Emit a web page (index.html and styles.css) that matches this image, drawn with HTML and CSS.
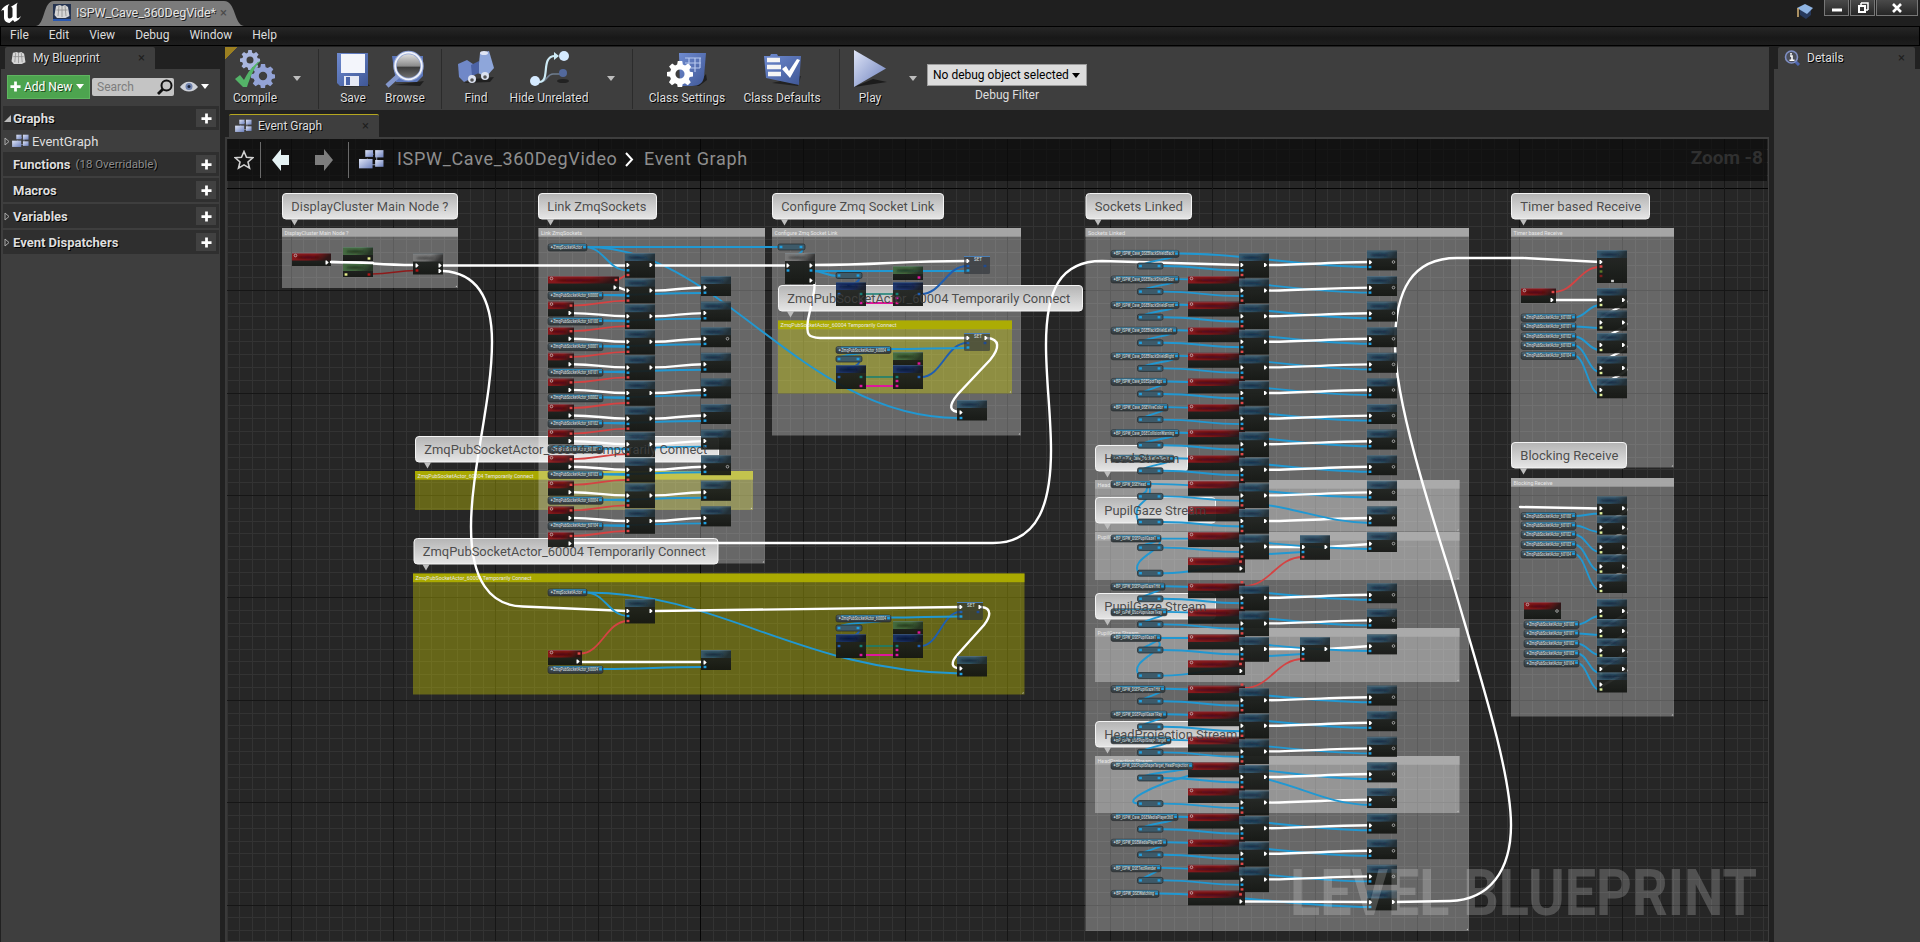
FILE: index.html
```html
<!DOCTYPE html>
<html lang="en">
<head>
<meta charset="utf-8">
<title>ISPW_Cave_360DegVideo</title>
<link rel="stylesheet" href="styles.css">
</head>
<body>
<svg class="defs" width="0" height="0">
  <defs>
    <linearGradient id="peri" x1="0" y1="0" x2="1" y2="1"><stop offset="0" stop-color="#dfe5f7"/><stop offset="1" stop-color="#6c80bd"/></linearGradient>
    <linearGradient id="flop" x1="0" y1="0" x2="1" y2="1"><stop offset="0" stop-color="#6f8bd0"/><stop offset="1" stop-color="#3f5796"/></linearGradient>
    <linearGradient id="lens" x1="0" y1="0" x2="0" y2="1"><stop offset="0" stop-color="#e8e8e8"/><stop offset=".5" stop-color="#8b8b8b"/><stop offset=".55" stop-color="#3c3c3c"/><stop offset="1" stop-color="#777"/></linearGradient>
    <symbol id="i-graph" viewBox="0 0 24 20">
      <path d="M8 5h6M17 7v6M8 9v4M9 15h8" stroke="#8e96b0" stroke-width="1" fill="none"/>
      <rect x="6" y="1" width="7.5" height="6.5" fill="url(#peri)"/><rect x="15.5" y="1" width="8" height="7" fill="url(#peri)"/>
      <rect x="0" y="9.500" width="13" height="9" fill="url(#peri)"/><rect x="15.500" y="10.500" width="8" height="6.500" fill="url(#peri)"/>
    </symbol>
    <symbol id="i-book" viewBox="0 0 16 15">
      <path d="M2 2l4-1 2 1 3-1 3 2 1.500 9-4 2H3L.5 11z" fill="#d6d6d6"/>
      <path d="M5 2L4 12M8 2v11M11 2l1 10M2.500 6h11" stroke="#8d8d8d" stroke-width=".8" fill="none"/>
    </symbol>
    <symbol id="i-gear" viewBox="0 0 20 20">
      <path fill-rule="evenodd" d="M8.300 0h3.400l.5 2.700 1.700.7L16.200 2l2.400 2.400-1.600 2.300.7 1.600 2.300.4v3.200l-2.500.5-.7 1.700 1.500 2.200-2.300 2.300-2.200-1.500-1.800.7-.4 2.700H8.300l-.5-2.700-1.700-.7-2.300 1.500-2.300-2.300L3 13.900l-.7-1.700L0 11.700V8.500L2.500 8l.6-1.600L1.600 4.200 4 1.900l2.200 1.500 1.600-.7zM10 6.500a3.500 3.500 0 1 0 0 7 3.500 3.500 0 0 0 0-7z"/>
    </symbol>
    <symbol id="i-plus" viewBox="0 0 12 12"><path d="M6 .5v11M.5 6h11" stroke="#fff" stroke-width="3" fill="none"/></symbol>
  </defs>
</svg>

<div class="app">
  <header class="titlebar">
    <svg class="ue" width="24" height="22" viewBox="0 0 24 22"><path d="M1 9.500C2 6 5 3.500 9.500 2 8 3.500 7.800 5 7.800 7v7.500c0 1.500.8 2 1.700 2 1.200 0 2.500-1 3-2V7c0-1.500-.8-2.300-1.800-2C12.500 3.500 15 2.500 18 .5c-1 1.200-1.300 2-1.300 4V15c0 1.700 1.600 1.700 4.300-1-1 3-3.500 5-6.500 6L13 18l-3.500 3C5.500 20.500 4 18 4 15.500V9.500C4 7.500 2.500 7.500 1 9.500z" fill="#fff"/></svg>
    <div class="wintab">
      <svg class="wintab-bg" width="210" height="26" viewBox="0 0 210 26"><path d="M0 26C9 25 7 1 18 1H188c12 0 10 24 20 25z" fill="#7b7b7b"/></svg>
      <span class="wintab-icon"><svg width="16" height="15"><use href="#i-book"/></svg></span>
      <span class="wintab-name">ISPW_Cave_360DegVide*</span>
      <span class="wintab-x">×</span>
    </div>
    <span class="spacer"></span>
    <svg class="cap" width="18" height="18" viewBox="0 0 18 18"><path d="M4 7v5l6 4 5-4V7z" fill="#27395c"/><path d="M1 5l8-4 8 4-6 6z" fill="#8fb4e3"/><path d="M2 5v9" stroke="#d9b679" stroke-width="1.500"/></svg>
    <div class="winbtns">
      <span class="wb"><svg width="12" height="12"><path d="M1 8h10" stroke="#fff" stroke-width="3"/></svg></span>
      <span class="wb"><svg width="12" height="12"><path d="M4 1h7v7M4 1v2M11 8H9" stroke="#fff" stroke-width="1.500" fill="none"/><rect x="2" y="4" width="6" height="6" stroke="#fff" stroke-width="2" fill="none"/></svg></span>
      <span class="wb wide"><svg width="12" height="12"><path d="M2 2l8 8M10 2l-8 8" stroke="#fff" stroke-width="2.600"/></svg></span>
    </div>
  </header>
  <nav class="menubar"><span>File</span><span>Edit</span><span>View</span><span>Debug</span><span>Window</span><span>Help</span></nav>

  <div class="main">
    <aside class="left">
      <div class="tab tab-left"><svg width="15" height="14"><use href="#i-book"/></svg><span>My Blueprint</span><i>×</i></div>
      <div class="panel">
        <div class="tools">
          <div class="addnew"><svg width="11" height="11"><use href="#i-plus"/></svg><span>Add New</span><b class="caret"></b></div>
          <div class="search"><span>Search</span><svg width="16" height="16" viewBox="0 0 16 16"><circle cx="9.500" cy="6.500" r="5" fill="none" stroke="#111" stroke-width="2"/><path d="M6 10l-5 5" stroke="#111" stroke-width="2.800"/></svg></div>
          <svg class="eye" width="18" height="12" viewBox="0 0 18 12"><path d="M0 6C5-1 13-1 18 6 13 12 5 12 0 6z" fill="#ced1d8"/><circle cx="9" cy="5.500" r="3.500" fill="#6f82ad"/><circle cx="9" cy="5.500" r="1.500" fill="#1c2438"/></svg>
          <b class="caret"></b>
        </div>
        <div class="row head"><svg class="tri" width="7" height="7"><path d="M7 0v7H0z" fill="#bbb"/></svg><span>Graphs</span><u><svg width="11" height="11"><use href="#i-plus"/></svg></u></div>
        <div class="row sub"><svg class="tri" width="6" height="9"><path d="M1 1l4 3.500L1 8z" fill="none" stroke="#aaa"/></svg><svg class="gi" width="17" height="14"><use href="#i-graph"/></svg><span>EventGraph</span></div>
        <div class="row head"><span class="tri"></span><span>Functions</span><em>(18 Overridable)</em><u><svg width="11" height="11"><use href="#i-plus"/></svg></u></div>
        <div class="row head"><span class="tri"></span><span>Macros</span><u><svg width="11" height="11"><use href="#i-plus"/></svg></u></div>
        <div class="row head"><svg class="tri" width="6" height="9"><path d="M1 1l4 3.500L1 8z" fill="none" stroke="#aaa"/></svg><span>Variables</span><u><svg width="11" height="11"><use href="#i-plus"/></svg></u></div>
        <div class="row head"><svg class="tri" width="6" height="9"><path d="M1 1l4 3.500L1 8z" fill="none" stroke="#aaa"/></svg><span>Event Dispatchers</span><u><svg width="11" height="11"><use href="#i-plus"/></svg></u></div>
      </div>
    </aside>

    <section class="center">
      <div class="toolbar">
        <div class="group g1">
          <div class="tool w60"><svg width="42" height="40" viewBox="0 0 42 40"><use href="#i-gear" x="6" y="1" width="20" height="20" fill="#a9b6df"/><use href="#i-gear" x="17" y="15" width="24" height="24" fill="#93a3d6"/><path d="M1 30l5-4 4 5c4-8 8-14 17-20-7 8-10 15-14 27H9z" fill="#54b368"/></svg><span>Compile</span></div>
          <div class="drop"><b class="caret dim"></b></div>
        </div>
        <div class="group g2">
          <div class="tool w52"><svg width="36" height="40" viewBox="0 0 36 40"><path d="M5 38l30-1-4-4z" fill="#222"/><path d="M2 4h31v33H5l-3-3z" fill="url(#flop)"/><rect x="6" y="5" width="24" height="19" fill="#f3f5fb"/><rect x="9" y="27" width="15" height="10" fill="#e6e9f4"/><rect x="11" y="28" width="4" height="8" fill="#4a64a8"/></svg><span>Save</span></div>
          <div class="tool w52"><svg width="42" height="40" viewBox="0 0 42 40"><path d="M10 36l26 1 4-5z" fill="#1f1f1f"/><path d="M8 7h31v20l-6 6H12z" fill="#5b76ba"/><path d="M14 27L3 37" stroke="#8397cb" stroke-width="4.500"/><circle cx="24.500" cy="17" r="13.500" fill="url(#lens)" stroke="#8fa2d4" stroke-width="3.500"/><circle cx="24.500" cy="17" r="13.300" fill="none" stroke="#f0f3fb" stroke-width="1.800"/></svg><span>Browse</span></div>
        </div>
        <div class="group g3">
          <div class="tool w52"><svg width="40" height="40" viewBox="0 0 40 40"><path d="M8 34l26-1 4-5-20 2z" fill="#202020"/><path d="M2 15l9-4 6 4-1 14-8 4-5-5z" fill="#7088c8"/><path d="M24 4l9-2 5 17-8 9-8-4z" fill="#8ea6da"/><path d="M15 16l8-4v12l-7 3z" fill="#4c63a5"/><ellipse cx="28" cy="4" rx="4" ry="2" fill="#dfe5f5"/><circle cx="16" cy="30" r="4" fill="#dce2f0"/><circle cx="29" cy="27" r="4" fill="#dce2f0"/><circle cx="16" cy="31" r="1.800" fill="#555"/><circle cx="29" cy="28" r="1.800" fill="#555"/></svg><span>Find</span></div>
          <div class="tool w94"><svg width="40" height="40" viewBox="0 0 40 40"><ellipse cx="34" cy="32" rx="6" ry="2" fill="#222"/><path d="M6 33h5c7 0 7-8 13-8h8" stroke="#6f7d8f" stroke-width="1.700" fill="none"/><path d="M6 33h4c12 0 1-26 16-26h3" stroke="#cdeaf5" stroke-width="2.200" fill="none"/><path d="M25 3l5 4-5 4z" fill="#cdeaf5"/><circle cx="35" cy="7" r="5" fill="#d5eaff"/><circle cx="6" cy="32" r="5" fill="#d5eaff"/><circle cx="34" cy="24" r="4" fill="#53699c"/></svg><span>Hide Unrelated</span></div>
          <div class="drop"><b class="caret dim"></b></div>
        </div>
        <div class="group g4">
          <div class="tool w94"><svg width="42" height="40" viewBox="0 0 42 40"><path d="M8 37l24-2 8-10 1 6-8 6z" fill="#1f1f1f"/><path d="M13 4h27l-2 24c-1 6-5 9-12 9H14z" fill="url(#flop)"/><path d="M19 9h16M19 14h16M19 19h15M23 9v13M29 9v14M34 9v10" stroke="#b6c7ee" stroke-width="1.200"/><use href="#i-gear" x="1" y="12" width="26" height="26" fill="#fff"/></svg><span>Class Settings</span></div>
          <div class="tool w94"><svg width="40" height="40" viewBox="0 0 40 40"><path d="M10 34l26 3 3-10z" fill="#222"/><path d="M2 7h6l1-2h6l1 2h23l-2 29-33-7z" fill="url(#flop)"/><path d="M5 11h13M5 18h14M6 25h13" stroke="#f5f5f5" stroke-width="4.500"/><path d="M20 20l4-3 3 5 8-12 3 1-10 18z" fill="#fff"/></svg><span>Class Defaults</span></div>
        </div>
        <div class="group g5">
          <div class="tool w52"><svg width="36" height="40" viewBox="0 0 36 40"><path d="M2 38l33-5-14-3z" fill="#1c1c1c"/><path d="M2 1l32 18.500L2 38z" fill="url(#peri)"/></svg><span>Play</span></div>
          <div class="drop"><b class="caret dim"></b></div>
          <div class="filter"><div class="combo"><span>No debug object selected</span><b class="caret dark"></b></div><span>Debug Filter</span></div>
        </div>
      </div>
      <div class="tab tab-graph"><svg width="17" height="14"><use href="#i-graph"/></svg><span>Event Graph</span><i>×</i></div>
      <div class="graph">
        <svg id="canvas" class="canvas" viewBox="227 139 1541 802"></svg>
        <div class="crumbs">
          <svg class="star" width="20" height="20" viewBox="0 0 20 20"><path d="M10 1.500l2.500 5.800 6.300.5-4.800 4.200 1.500 6.200-5.500-3.300-5.500 3.300L6 12 1.200 7.800l6.300-.5z" fill="none" stroke="#d0d0d0" stroke-width="1.600"/></svg>
          <span class="vsep"></span>
          <svg class="back" width="17" height="22" viewBox="0 0 17 22"><path d="M0 11L9 0v6h8v10H9v6z" fill="#e4f1f3"/></svg>
          <svg class="fwd" width="18" height="22" viewBox="0 0 18 22"><path d="M18 11L9 0v6H0v10h9v6z" fill="#7d7d7d"/></svg>
          <span class="vsep"></span>
          <svg class="cg" width="25" height="21"><use href="#i-graph"/></svg>
          <span class="crumb c1">ISPW_Cave_360DegVideo</span>
          <svg class="chev" width="9" height="15" viewBox="0 0 9 15"><path d="M1 1l6 6.500L1 14" fill="none" stroke="#fff" stroke-width="2"/></svg>
          <span class="crumb c2">Event Graph</span>
          <span class="zoom">Zoom -8</span>
        </div>
      </div>
    </section>

    <aside class="right">
      <div class="tab tab-right"><svg width="17" height="16" viewBox="0 0 17 16"><path d="M10 10l5 5" stroke="#4e66ad" stroke-width="3"/><circle cx="7.500" cy="7" r="6" fill="#4b4f5a" stroke="#7f8fc5" stroke-width="1.600"/><path d="M6 6h2v4M5.500 10.200h5M7 3v1.800" stroke="#fff" stroke-width="1.600" fill="none"/></svg><span>Details</span><i>×</i></div>
      <div class="panel"></div>
    </aside>
  </div>
</div>
<script src="graph.js"></script>
</body>
</html>
```

FILE: styles.css
```css
* { box-sizing: border-box; }
body { margin: 0; background: #212121; font-family: Roboto, "Liberation Sans", sans-serif; font-size: 12px; color: #dedede; overflow: hidden; }
.defs { position: absolute; }
svg { display: block; flex: none; }
.app { display: flex; flex-direction: column; width: 1920px; height: 942px; }
.spacer { flex: 1; }

.titlebar { display: flex; height: 26px; background: #1f1f1f; }
.ue { margin: 2px 0 0 0; }
.wintab { position: relative; display: flex; align-items: center; width: 210px; height: 26px; margin-left: 12px; padding: 0 0 1px 17px; }
.wintab-bg { position: absolute; left: 0; top: 0; }
.wintab-icon { position: relative; width: 18px; height: 17px; background: #243350; border-bottom: 2px solid #2a58b0; padding-left: 1px; }
.wintab-name { position: relative; margin-left: 5px; width: 140px; font-size: 12.5px; letter-spacing: -.08px; color: #e4e4e4; text-shadow: 1px 1px 0 #222; white-space: nowrap; }
.wintab-x { position: relative; margin-left: 4px; font-size: 13px; color: #4a4a4a; }
.cap { margin: 3px 10px 0 0; }
.winbtns { display: flex; height: 15px; margin-right: 2px; }
.wb { width: 25px; height: 16px; margin-right: 1px; border: 1px solid #777; border-top: 0; background: linear-gradient(#4a4a4a, #262626); display: flex; align-items: center; justify-content: center; }
.wb.wide { width: 42px; margin-right: 0; }

.menubar { display: flex; height: 20px; align-items: center; border: 1px solid #000; background: linear-gradient(#262626, #181818 60%, #1d1d1d); padding: 0 0 2px 9px; font-size: 12px; color: #dcdcdc; }
.menubar span { margin-right: 20px; }

.main { flex: 1; display: flex; min-height: 0; padding-top: 1px; }
.left { width: 221px; display: flex; flex-direction: column; padding-left: 1px; }
.center { width: 1545px; margin-left: 4px; display: flex; flex-direction: column; }
.right { flex: 1; margin-left: 4px; display: flex; flex-direction: column; }
.panel { flex: 1; background: #3e3e3e; margin-right: 1px; }
.right .panel { margin-right: 0; }
.tab { display: flex; align-items: center; height: 22px; background: #3e3e3e; border-radius: 2px 2px 0 0; text-shadow: 1px 1px 0 #000; }
.tab i { font-style: normal; color: #1f1f1f; margin-left: auto; font-size: 13px; text-shadow: none; }
.tab-left, .tab-right, .tab-graph { font-size: 12px; padding: 0 10px 1px 6px; }
.tab-left { width: 150px; margin-left: 4px; gap: 7px; }
.tab-right { width: 137px; margin-left: 4px; gap: 6px; }
.tab-graph { width: 150px; height: 23px; margin: 4px 0 0 4px; gap: 6px; border-top: 1px solid #b5a71f; }

.tools { display: flex; align-items: center; height: 37px; padding: 0 0 2px 6px; }
.addnew { display: flex; align-items: center; width: 83px; height: 24px; background: #4da44f; border: 1px solid #5fb560; padding: 0 5px 0 2px; font-size: 12px; text-shadow: 1px 1px 0 #1c4a1c; color: #fff; }
.addnew span { margin: 0 4px 0 3px; white-space: nowrap; }
.caret { width: 0; height: 0; border: 4.500px solid transparent; border-top: 5px solid #fff; border-bottom: 0; flex: none; }
.caret.dim { border-top-color: #bdbdbd; }
.caret.dark { border-top-color: #000; }
.search { display: flex; align-items: center; justify-content: space-between; width: 82px; height: 18px; margin-left: 2px; background: #c4c4c4; border-radius: 2px; padding: 0 1px 0 5px; color: #7d7d7d; }
.eye { margin: 0 3px 0 6px; }
.row { display: flex; align-items: center; height: 24px; margin: 0 1px 2px 2px; }
.row.head { background: #2f2f2f; font-weight: 700; font-size: 13px; text-shadow: 1px 1px 0 #000; }
.row.sub { height: 22px; margin-bottom: 0; margin-top: -2px; font-size: 13px; }
.tri { width: 7px; margin: 0 2px 0 1px; flex: none; }
.gi { margin-right: 3px; }
.sub .tri { margin-right: 1px; }
.row em { font: 400 11.500px Roboto, sans-serif; color: #8c8c8c; margin-left: 5px; }
.row u { margin-left: auto; margin-right: 3px; width: 20px; height: 18px; background: #414141; display: flex; align-items: center; justify-content: center; text-decoration: none; }

.toolbar { display: flex; height: 63px; width: 1544px; background: linear-gradient(135deg, #9c8021 0 9px, transparent 9px) no-repeat, #3e3e3e; }
.group { display: flex; height: 60px; margin-top: 2px; border-right: 1px solid #2b2b2b; }
.g1 { width: 94px; }
.g2 { width: 123px; padding-left: 8px; }
.g3 { width: 191px; padding-left: 8px; }
.g4 { width: 207px; padding-left: 7px; gap: 1px; }
.g5 { border: 0; padding-left: 4px; }
.tool { display: flex; flex-direction: column; align-items: center; white-space: nowrap; text-shadow: 1px 1px 0 #000; line-height: 16px; }
.tool svg { margin: 0 0 1px; }
.w60 { width: 60px; }
.w52 { width: 52px; }
.w94 { width: 94px; }
.g3 .drop { margin-left: 3px; }
.g5 .drop { margin-left: 5px; }
.drop { width: 24px; display: flex; justify-content: center; padding-top: 27px; }
.filter { display: flex; flex-direction: column; align-items: center; margin-left: 2px; padding-top: 15px; }
.combo { display: flex; align-items: center; justify-content: space-between; width: 160px; height: 22px; background: #dcdcdc; border: 1px solid #9c9c9c; color: #000; padding: 0 6px 0 5px; margin-bottom: 2px; white-space: nowrap; }

.graph { position: relative; flex: 1; border: 2px solid #3e3e3e; border-bottom-width: 1px; border-left-color: #3a3a3a; width: 1544px; min-height: 0; }
.canvas { width: 1541px; height: 802px; }
.crumbs { position: absolute; left: 0; top: 0; right: 0; height: 42px; padding-bottom: 1px; display: flex; align-items: center; background: rgba(8, 8, 8, .66); }
.star { margin-left: 7px; }
.vsep { width: 1px; height: 36px; background: #6a6a6a; margin-left: 6px; }
.back { margin-left: 11px; }
.fwd { margin-left: 26px; }
.fwd + .vsep { margin-left: 15px; }
.cg { margin-left: 10px; }
.crumb { font-size: 18px; letter-spacing: .68px; color: #8e8e8e; white-space: nowrap; padding-bottom: 2px; }
.c1 { width: 220px; margin-left: 13px; }
.c2 { letter-spacing: .7px; }
.chev { margin: 0 10px 0 8px; }
.zoom { margin: 0 4px 5px auto; font-size: 19px; font-weight: 700; color: #303030; }

.bubble-text { font: 13px Roboto, sans-serif; fill: #404040; fill-opacity: .92; }
.comment-text { font: 5.500px Roboto, sans-serif; fill: #e6e6e6; }
.pill-text { font: 500 4.500px Roboto, sans-serif; fill: #cbd6da; }
.mark { font: 700 65px Roboto, sans-serif; fill: #fff; fill-opacity: .2; }
.wire { fill: none; stroke-linecap: round; }
.white { stroke: #fff; stroke-width: 2.400; }
.blue { stroke: #2198d2; stroke-width: 1.900; }
.navy { stroke: #1f5eb0; stroke-width: 1.900; }
.red { stroke: #d44343; stroke-width: 1.800; }
.maroon { stroke: #8e1a1a; stroke-width: 1.600; }
.pink { stroke: #e0169c; stroke-width: 2.200; }
.teal { stroke: #157f73; stroke-width: 1.700; }
```

FILE: graph.js
```js
// Draws the blueprint graph: grid, comment boxes, wires, nodes.
const STEP = 25.6;
const layers = { grid: '', comments: '', wires: '', nodes: '', labels: '' };

function gradient(id, a, b) {
  return `<linearGradient id="${id}" x1="0" y1="0" x2="1" y2=".25"><stop offset="0" stop-color="${a}"/><stop offset=".6" stop-color="${a}"/><stop offset="1" stop-color="${b}"/></linearGradient>`;
}
const defs = `<defs>
  ${gradient('h-fn', '#34566b', '#1e2c34')}${gradient('h-ev', '#8b1317', '#2a1011')}
  ${gradient('h-pure', '#436b40', '#223322')}${gradient('h-flow', '#7b7b7b', '#333')}
  ${gradient('h-cast', '#142f66', '#101626')}
  <linearGradient id="bub" x1="0" y1="0" x2="0" y2="1"><stop offset="0" stop-color="#b4b4b4"/><stop offset="1" stop-color="#e6e6e6"/></linearGradient>
  <linearGradient id="body" x1="0" y1="0" x2="0" y2="1"><stop offset="0" stop-color="#222623"/><stop offset="1" stop-color="#131512"/></linearGradient>
  <linearGradient id="pillg" x1="0" y1="0" x2="0" y2="1"><stop offset="0" stop-color="#5d7886"/><stop offset=".35" stop-color="#3e4b51"/><stop offset="1" stop-color="#343a3c"/></linearGradient>
  <filter id="soft" x="-20%" y="-80%" width="140%" height="260%"><feGaussianBlur stdDeviation="1.300"/></filter>
</defs>`;

function line(x1, y1, x2, y2, color) {
  return `<path d="M${x1} ${y1}L${x2} ${y2}" stroke="${color}" stroke-width="1"/>`;
}
for (let pass = 0; pass < 2; pass++) {
  for (let i = -8; i < 120; i++) {
    const major = i % 8 === 0;
    if (major !== (pass === 1)) continue;
    const x = Math.floor(291 + i * 12.8) + .5, y = Math.floor(188.3 + i * 12.8) + .5;
    const dark = i === 32 ? '#050505' : '#161616';
    if (x > 227 && x < 1768) layers.grid += line(x, 139, x, 942, major ? dark : '#333');
    if (y > 139 && y < 942) layers.grid += line(227, y, 1768, y, major ? (i === 0 ? '#050505' : '#161616') : '#333');
  }
}

function bubble(x, y, w, text, textWidth, h = 26.5) {
  layers.comments += `<path d="M${x + 9} ${y + h}h7l-3.500 6z" fill="#bdbdbd"/>
    <rect x="${x + .5}" y="${y + .5}" width="${w - 1}" height="${h - 1}" rx="3.500" fill="url(#bub)" stroke="#f4f4f4"/>`;
  layers.labels += `<text class="bubble-text" x="${x + 9.3}" y="${y + 18}" textLength="${textWidth}" lengthAdjust="spacingAndGlyphs">${text}</text>`;
}
function comment(x, y, x2, y2, text, tw, yellow) {
  const w = x2 - x;
  layers.comments += `<rect x="${x}" y="${y}" width="${w}" height="${y2 - y}" fill="${yellow ? '#d0d005' : '#fff'}" fill-opacity="${yellow ? .375 : .3}"/>
    <rect x="${x}" y="${y}" width="${w}" height="8.700" fill="${yellow ? '#aeae00' : '#ababab'}" fill-opacity=".93"/>
    <text class="comment-text" x="${x + 2.5}" y="${y + 6.5}" textLength="${tw}" lengthAdjust="spacingAndGlyphs">${text}</text>
    <path d="M${x2 - 1} ${y2 - 2.5}v1.500h-1.500z" fill="#ccc"/>`;
}
function path(d, cls) { layers.wires += `<path class="wire ${cls}" d="${d}"/>`; }
function wire(x1, y1, x2, y2, cls) {
  const d = Math.max(Math.abs(x2 - x1) * .45, 4);
  path(`M${x1} ${y1}C${x1 + d} ${y1} ${x2 - d} ${y2} ${x2} ${y2}`, cls);
}
function exec(x, y) { layers.nodes += `<path d="M${x - 1.5} ${y - 2}h1.200l2 2-2 2h-1.200z" fill="#fff"/>`; }
function ring(x, y) { layers.nodes += `<circle cx="${x}" cy="${y}" r="1.300" fill="none" stroke="#ccc" stroke-width=".7"/>`; }
function pin(x, y, c = '#1f9fe0') { layers.nodes += `<rect x="${x - 1.4}" y="${y - 1.2}" width="2.800" height="2.400" fill="${c}"/>`; }
function box(x, y, w, h, type, hh = 8) {
  const smear = { fn: '#10283f', ev: '#4d0508', pure: '#20391f', flow: '#4a4a4a', cast: '#040d3a' }[type];
  layers.nodes += `<g opacity=".93"><rect x="${x}" y="${y}" width="${w}" height="${h}" fill="url(#body)"/>
    <rect x="${x}" y="${y}" width="${w}" height="${hh}" fill="url(#h-${type})"/>
    <ellipse cx="${x + w * .42}" cy="${y + hh * .58}" rx="${w * .32}" ry="1.600" fill="${smear}" filter="url(#soft)"/>
    <path d="M${x} ${y + .4}h${w}" stroke="#8aa0aa" stroke-opacity=".45" stroke-width=".8"/></g>`;
}
function event(x, y, w, h = 15) { box(x, y, w, h, 'ev', 7.5); ring(x + 3.5, y + 2.5); }
function pill(x, y, x2, text, h = 7) {
  const w = x2 - x;
  layers.nodes += `<rect x="${x}" y="${y}" width="${w}" height="${h}" rx="2" fill="url(#pillg)" stroke="#23292b" stroke-width=".6"/>
    <path d="M${x + 5} ${y + .8}H${x2 - 1}" stroke="#2690c4" stroke-width="1.200" stroke-opacity=".75"/>
    <text class="pill-text" x="${x + 2}" y="${y + 5}" textLength="${w - 7}" lengthAdjust="spacingAndGlyphs">✦${text}</text>`;
  pin(x2 - 2.5, y + 3.2);
}
function relay(x, y, w = 26) {
  layers.nodes += `<rect x="${x}" y="${y}" width="${w}" height="6" rx="1.800" fill="#3d5a69" stroke="#20262a" stroke-width=".7"/>`;
  pin(x + 3, y + 3); pin(x + w - 4, y + 3);
}
function setNode(x, y) {
  layers.nodes += `<rect x="${x}" y="${y}" width="26" height="18" rx="1.500" fill="#2d3238" fill-opacity=".62"/><path d="M${x} ${y + .5}h26" stroke="#4b7fb5"/>
    <text class="pill-text" x="${x + 10}" y="${y + 4.8}">SET</text>`;
  exec(x + 4, y + 5); pin(x + 4, y + 10, '#1f5eb0'); pin(x + 4, y + 14.5); pin(x + 21, y + 10, '#1f4a90');
}

/* Comment boxes and their bubbles */
comment(415, 471, 753, 510, 'ZmqPubSocketActor_60004 Temporarily Connect', 116, true);
bubble(415, 436, 304, 'ZmqPubSocketActor_60004 Temporarily Connect', 283);
comment(282, 228, 458, 288, 'DisplayCluster Main Node ?', 64);
bubble(282, 193, 176, 'DisplayCluster Main Node ?', 157);
comment(538.500, 228, 765, 563.500, 'Link ZmqSockets', 41);
bubble(538, 193, 119, 'Link ZmqSockets', 99);
comment(772, 228, 1021, 435.500, 'Configure Zmq Socket Link', 63);
bubble(772, 193, 172, 'Configure Zmq Socket Link', 153);
comment(778, 320.500, 1012, 393.500, 'ZmqPubSocketActor_60004 Temporarily Connect', 116, true);
bubble(778, 285, 305, 'ZmqPubSocketActor_60004 Temporarily Connect', 283);
comment(413, 573.500, 1024.500, 694.500, 'ZmqPubSocketActor_60004 Temporarily Connect', 116, true);
bubble(413.500, 538, 305, 'ZmqPubSocketActor_60004 Temporarily Connect', 283);
comment(1085.500, 228, 1469, 931, 'Sockets Linked', 37);
bubble(1085.500, 193, 106.500, 'Sockets Linked', 88);
comment(1095, 480, 1459.500, 531.500, 'Head Stream', 32);
bubble(1095, 445, 93, 'Head Stream', 75);
comment(1095, 532, 1459.500, 580, 'PupilGaze Stream', 41);
bubble(1095, 497, 121, 'PupilGaze Stream', 102);
comment(1095, 628, 1459.500, 682, 'PupilGaze Stream', 41);
bubble(1095, 593, 121, 'PupilGaze Stream', 102);
comment(1095, 756, 1459.500, 813, 'HeadProjection Stream', 55);
bubble(1095, 721, 150, 'HeadProjection Stream', 133);
comment(1511, 228, 1674, 467.500, 'Timer based Receive', 49);
bubble(1511, 193, 139, 'Timer based Receive', 121);
comment(1511, 478, 1674, 716.500, 'Blocking Receive', 39);
bubble(1511, 442, 116, 'Blocking Receive', 98);

/* Main node */
wire(331, 262, 414, 265, 'white'); wire(372, 274, 416, 270.500, 'maroon');
path('M443 265.500H627', 'white');
path('M443 271C478 273 492 300 492 342C492 400 471 470 471 527C471 580 490 606 523 606.500L627 611', 'white');
event(292, 253, 39, 13); exec(327, 262.500);
box(343, 247, 30, 14, 'pure'); pin(369, 258.500, '#e9f08a');
box(343, 263, 30, 14, 'pure'); pin(346, 274.500, '#e9f08a'); pin(369, 274.500, '#b01515');
layers.nodes += '<path class="wire white" d="M331 262L373 263"/>';
box(413, 253.500, 30, 21, 'flow'); exec(417, 265.500); exec(440, 265.500); exec(440, 271); pin(417, 270.500, '#b01515');

/* Link ZmqSockets */
path('M585 247H781', 'blue'); wire(585, 247, 627, 270.500, 'blue'); path('M587 247C720 247 800 417 958 418', 'blue');
pill(548, 244, 587, 'ZmqSocketActor');
const ports = [60000, 60100, 60001, 60101, 60002, 60102, 60003, 60103, 60004, 60104];
for (let k = 0; k <= 10; k++) {
  const y = 276 + STEP * k, w = k ? 26 : 71, f = 253 + STEP * k;
  wire(548 + w - 3, y + 4, 628, f + 22, 'red');
  event(548, y, w); pin(548 + w - 3, y + 4, '#e04848'); exec(548 + w - 4, y + 11.500);
  if (k < 10) {
    wire(548 + w - 2, y + 11.500, 628, f + STEP + 12, 'white');
    wire(653, f + STEP + 12, 704, y + 11.500, 'white');
    wire(602, y + 19, 628, f + STEP + 17, 'blue');
    wire(602, y + 19, 705, y + 17, 'blue');
    pill(548, y + 16, 603, 'ZmqPubSocketActor_' + ports[k], 7.500);
    box(701, y, 30, 20, 'fn'); exec(705, y + 11.500); pin(705, y + 16.700);
    if (k % 5 === 2) ring(727.500, y + 11.500);
  }
}
for (let k = 0; k <= 10; k++) {
  const f = 253 + STEP * k;
  box(625, f, 30, 24.800, 'fn'); exec(628, f + 12); exec(651, f + 12); pin(628, f + 17.300); pin(628, f + 22, '#e04848');
}
path('M572 543H993C1040 543 1051 500 1051 450C1051 415 1046 380 1046 345C1046 290 1060 261 1102 261L1242 265', 'white');

/* Configure socket link, and the two "Temporarily Connect" groups */
path('M655 265.500H787', 'white'); wire(812, 265, 967, 261, 'white');
path('M812 271H967', 'blue'); wire(812, 271, 838, 276, 'blue'); path('M802 248Q804 252 796 255', 'blue');
path('M812 280C818 282 812 300 808 320C806 335 808 337.500 820 338H967', 'white');
relay(778, 244, 27);
box(785, 253, 30, 31, 'flow'); exec(788, 265.500); pin(788, 270.500); exec(811, 265.500); pin(811, 270.500); exec(811, 280.500);
setNode(964, 256); relay(836, 272.500);
function castGroup(y, greenY, setY, setX) {
  wire(863, y + 12, 895, y + 12, 'teal'); wire(863, y + 21, 895, y + 21, 'pink');
  wire(921, y + 12, setX + 3, setY + 10, 'navy');
  path(`M858 ${y - 5}Q862 ${y} 848 ${y + 3}`, 'navy');
  box(836, y, 30, 24, 'cast'); pin(839, y + 12, '#1f5eb0'); pin(861, y + 12, '#157f73'); pin(861, y + 21, '#e0169c');
  box(893, greenY, 30, 14, 'pure'); pin(919, greenY + 11.500, '#e0169c');
  box(893, y, 30, 24, 'cast'); pin(897, y + 12, '#157f73'); pin(897, y + 16, '#e0169c'); pin(897, y + 21, '#e0169c'); pin(919, y + 12, '#1f5eb0');
}
castGroup(282, 266, 256, 964);
castGroup(365, 352, 333, 964);
castGroup(634, 621, 602, 957);
wire(889, 349, 967, 348, 'blue'); pill(836, 346.500, 891, 'ZmqPubSocketActor_60004'); path('M888 350C870 354 850 352 838 358', 'blue'); relay(836, 356);
setNode(964, 333); exec(986, 338);
path('M987 338C1000 339 1000 348 990 360L958 394C948 406 949 412 961 412', 'white');
box(957, 400, 30, 20.500, 'fn'); exec(961, 412.500); pin(961, 418);

wire(586, 592.500, 628, 616, 'blue'); path('M586 592.500C720 592 800 672 961 673.500', 'blue');
path('M655 611L960 607', 'white'); wire(580, 653.500, 628, 621, 'red'); path('M579 662H704', 'white'); wire(602, 669, 704, 667, 'blue');
pill(548, 589, 587, 'ZmqSocketActor');
box(625, 599, 30, 24.500, 'fn'); exec(628, 611); exec(651, 611); pin(628, 616); pin(628, 621, '#e04848');
event(548, 650, 34); pin(579, 653.500, '#e04848'); exec(578, 661.500); pill(548, 666, 603, 'ZmqPubSocketActor_60004', 7.500);
box(701, 650, 30, 20, 'fn'); exec(705, 662.500); pin(705, 667);
wire(889, 617.500, 960, 616.500, 'blue'); pill(836, 615, 891, 'ZmqPubSocketActor_60004'); path('M888 620C870 624 850 621 838 627', 'blue'); relay(836, 625);
setNode(957, 602); exec(980, 607);
path('M981 607C993 608 990 617 984 625L958 654C950 663 951 668 961 668.500', 'white');
box(957, 656, 30, 20.500, 'fn'); exec(961, 668.500); pin(961, 674);

/* Sockets linked */
const actors = {
  0: ['Cave_DSEBlackShieldBack', 1179], 1: ['Cave_DSEBlackShieldFloor', 1179], 2: ['Cave_DSEBlackShieldFront', 1179],
  3: ['Cave_DSEBlackShieldLeft', 1177], 4: ['Cave_DSEBlackShieldRight', 1179], 5: ['Cave_DSESpotTags', 1167],
  6: ['Cave_DSEViveColor', 1168], 7: ['Cave_DSECollisionWarning', 1179], 8: ['Cave_DSEMediaPlayer', 1174],
  9: ['DSEHead', 1151], 11: ['DSEPupilGaze1', 1161], 13: ['DSEPupilGaze1Hit', 1165], 14: ['DSEPupilGaze1Ray', 1167],
  15: ['DSEPupilGaze1', 1161], 17: ['DSEPupilGaze1Hit', 1165], 18: ['DSEPupilGaze1Ray', 1167], 19: ['DSEPupilShapeTarget', 1171],
  20: ['DSEPupilShapeTarget_HeadProjection', 1193], 22: ['Cave_DSEMediaPlayer360', 1178], 23: ['DSEMediaPlayer3D', 1167],
  24: ['DSETestRender', 1161], 25: ['DSEWatching', 1159]
};
for (let k = 0; k <= 25; k++) {
  const d = STEP * k, merged = k === 12 || k === 16, y = d + (k === 11 ? 3 : 0);
  if (actors[k]) {
    const r = actors[k][1];
    if (k === 11 || k === 15) path(`M${r} ${y + 254}H1242`, 'blue');
    else path(`M${r} ${y + 253.500}C${r + 70} ${y + 253.500} 1300 ${d + 267} 1370 ${d + 267}`, 'blue');
    if (k < 25) path(`M${r - 2} ${y + 255}C${r - 8} ${y + 260} 1152 ${d + 259} 1139 ${d + 266}`, 'blue');
    pill(1111, y + 250.400, r, 'BP_ISPW_' + actors[k][0]);
  }
  if (k < 25) {
    wire(1163, d + 266, 1242, merged ? d + 258 : d + 270.500, 'blue');
    relay(1137.500, d + 263, 25.500);
    event(1188, d + 276, 57); exec(1241, d + 287);
  }
  if (!merged) {
    if (k !== 11 && k !== 15 && k < 25) path(`M1267 ${d + 265}C1300 ${d + 265} 1340 ${d + 262} 1371 ${d + 262}`, 'white');
    box(1367, d + 250.400, 30, 20, 'fn'); exec(1370.500, d + 262.200); pin(1370, d + 267);
    if (k < 25) ring(1393.500, d + 262); else exec(1393.500, d + 262);
  }
}
for (let k = 0; k < 25; k++) {
  const f = 253 + STEP * k;
  if (k !== 12 && k !== 16) { box(1239, f, 30, 24.800, 'fn'); exec(1242, f + 12); exec(1265.500, f + 12); pin(1242, f + 17.300); }
  pin(1242, f + 22, '#e04848'); pin(1240.500, f + 27, '#e04848');
}
path('M1149 485C1155 505 1131 498 1138 521', 'blue'); path('M1267 505C1310 512 1330 522 1370 523', 'blue');
path('M1266 779C1310 790 1330 804 1370 805', 'blue'); path('M1188 776C1150 786 1120 803 1139 803.500', 'blue');
for (const y of [535, 637]) {
  path(`M1159 ${y + 5}C1166 ${y + 14} 1128 ${y + 24} 1139 ${y + 38}`, 'blue');
  path(`M1266 ${y + 12}H1303`, 'white'); path(`M1327 ${y + 12}L1371 ${y + 9}`, 'white');
  path(`M1269 ${y + 8}C1285 ${y + 10} 1340 ${y + 14} 1370 ${y + 14}`, 'blue'); path(`M1269 ${y + 19}L1303 ${y + 17}`, 'blue');
  wire(1244, y + 51, 1303, y + 22, 'red');
  box(1300, y, 30, 24.800, 'fn'); exec(1303.500, y + 12); exec(1326, y + 12); pin(1303, y + 17); pin(1303, y + 22, '#e04848');
}
path('M1243 901.500L1371 902', 'white');
path('M1394 902L1450 901C1490 900 1511 870 1511 825C1511 770 1478 670 1450 573C1430 510 1395 400 1395 345C1395 290 1412 258 1457 258H1523L1600 262', 'white');

/* Receive groups */
function pillStack(x, ys, targets) {
  ys.forEach((y, i) => {
    wire(x + 53, y + 3.5, 1600, targets[i], 'blue');
    pill(x, y, x + 55, 'ZmqPubSocketActor_6010' + i, 7.500);
  });
}
function receive(tops, h) {
  tops.forEach((y, i) => {
    box(1597, y, 30, h, 'fn', 7.500); exec(1601, y + 12); pin(1601, y + 17, '#dff09a');
    if (i < tops.length - 1) { exec(1623.500, y + 12); path(`M1624 ${y + 12}C1636 ${y + 14} 1598 ${y + 27} 1600 ${y + h + 13}`, 'white'); }
  });
}
wire(1554, 292, 1600, 267, 'red'); path('M1553 300H1600', 'white');
box(1597, 250, 30, 33, 'fn'); exec(1601, 262); pin(1601, 266.500, '#e04848'); pin(1601, 271.500, '#5c7a2c'); pin(1601, 276, '#7a1c1c'); pin(1612.500, 281, '#ccc');
event(1521, 288, 35); pin(1553, 292, '#e04848'); exec(1552, 300);
receive([288, 310.500, 333, 356, 378], 20.300);
pillStack(1521, [314, 323, 333, 342, 352], [305, 328, 350, 372, 394]);
path('M1520 507L1600 508.500', 'white');
receive([496.300, 515.600, 535.300, 554.600, 574], 19);
pillStack(1521, [512.500, 522, 531, 541, 550.500], [513.500, 532, 552, 571, 590]);
event(1524, 602, 37, 17); ring(1557, 611);
receive([599, 619, 638.500, 657, 672.500], 20);
pillStack(1524, [621, 630, 640, 650, 659.500], [616, 635, 655, 673, 690]);

document.getElementById('canvas').innerHTML = defs +
  '<rect x="227" y="139" width="1541" height="803" fill="#262626"/>' +
  layers.grid + layers.comments + layers.wires + layers.nodes + layers.labels +
  '<text class="mark" x="1290" y="915" textLength="467" lengthAdjust="spacingAndGlyphs">LEVEL BLUEPRINT</text>';
```
